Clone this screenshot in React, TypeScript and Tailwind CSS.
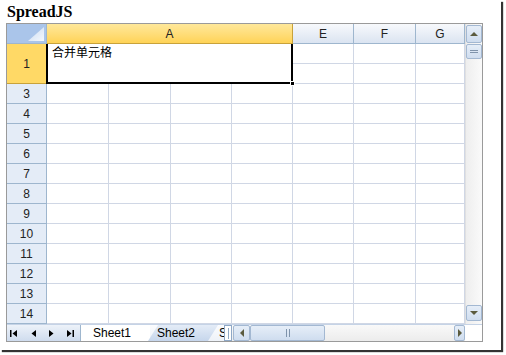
import React from "react";

const gridLine = "border-r border-b border-[#d0d7e5]";
const colHead =
  "flex items-center justify-center border-r border-b border-[#9eb6ce] bg-gradient-to-b from-[#f7f9fc] to-[#dbe4f1] text-[12px] text-[#222]";
const rowHead =
  "flex items-center justify-center border-r border-b border-[#9eb6ce] bg-[#e4ecf7] text-[12px] text-[#222]";

const rows = [3, 4, 5, 6, 7, 8, 9, 10, 11, 12, 13, 14];

function ScrollBtn({ children, className = "" }: { children?: React.ReactNode; className?: string }) {
  return (
    <div
      className={`flex shrink-0 items-center justify-center rounded-[2px] border border-[#a3b8d2] bg-gradient-to-b from-[#e6eef8] to-[#cfddef] ${className}`}
    >
      {children}
    </div>
  );
}

export default function App() {
  return (
    <div className="w-[506px] h-[355px] bg-white font-['Liberation_Sans',sans-serif]">
      <div className="w-[501px] h-[350px] bg-white shadow-[2px_2px_1px_#333]">
        <div className="pl-[7px] pt-[3px] h-[21px] font-bold text-[16px] leading-[18px] font-['Liberation_Serif',serif] text-black">
          SpreadJS
        </div>

        <div className="ml-[6px] mt-[2px] w-[477px] h-[319px] border border-[#9a9a9a] flex flex-col">
          <div className="flex h-[300px]">
            {/* sheet grid */}
            <div className="w-[458px] overflow-hidden">
              <div className="grid w-[458px] grid-cols-[40px_62px_62px_61px_61px_61px_62px_49px] grid-rows-[repeat(15,20px)]">
                <div className="relative border-r border-b border-[#9eb6ce] bg-[#aac5ea]">
                  <div className="absolute right-[2px] bottom-[2px] w-[16px] h-[14px] bg-gradient-to-br from-[#c9daf1] to-[#f4f8fd] [clip-path:polygon(100%_0,100%_100%,0_100%)]" />
                </div>
                <div className="col-span-4 flex items-center justify-center border-r border-b border-[#c8a23a] bg-gradient-to-b from-[#ffe89a] to-[#ffd355] text-[12px] text-[#222]">
                  A
                </div>
                <div className={colHead}>E</div>
                <div className={colHead}>F</div>
                <div className={colHead}>G</div>

                <div className="row-span-2 flex items-center justify-center border-r border-b border-[#c8a23a] bg-[#ffd966] text-[12px] text-[#222]">
                  1
                </div>
                <div className={`relative col-span-4 row-span-2 bg-white ${gridLine}`}>
                  <div className="pl-[5px] pt-[1px] text-[12px] leading-[14px] text-black font-['Noto_Sans_CJK_SC',sans-serif]">
                    合并单元格
                  </div>
                  <div className="absolute -left-[1px] -right-[1px] top-0 -bottom-[1px] border-l-2 border-r-2 border-b-2 border-black" />
                  <div className="absolute -right-[3px] -bottom-[3px] w-[5px] h-[5px] bg-black border border-white" />
                </div>
                {[0, 1, 2, 3, 4, 5].map((i) => (
                  <div key={i} className={gridLine} />
                ))}

                {rows.map((r) => (
                  <React.Fragment key={r}>
                    <div className={rowHead}>{r}</div>
                    {[0, 1, 2, 3, 4, 5, 6].map((c) => (
                      <div key={c} className={gridLine} />
                    ))}
                  </React.Fragment>
                ))}
              </div>
            </div>

            {/* vertical scrollbar */}
            <div className="w-[17px] flex flex-col items-center pt-[1px] pb-[3px] gap-[1px] bg-gradient-to-r from-[#eeeeee] to-[#fafafa] border-l border-[#e0e0e0]">
              <ScrollBtn className="w-[16px] h-[18px]">
                <div className="w-0 h-0 border-l-[4px] border-r-[4px] border-b-[4px] border-l-transparent border-r-transparent border-b-[#5b5b3e]" />
              </ScrollBtn>
              <ScrollBtn className="w-[16px] h-[15px] flex-col gap-[1px]">
                <div className="w-[8px] h-[1px] bg-[#7f93ab]" />
                <div className="w-[8px] h-[1px] bg-[#7f93ab]" />
              </ScrollBtn>
              <div className="flex-1" />
              <ScrollBtn className="w-[16px] h-[16px]">
                <div className="w-0 h-0 border-l-[4px] border-r-[4px] border-t-[4px] border-l-transparent border-r-transparent border-t-[#5b5b3e]" />
              </ScrollBtn>
            </div>
          </div>

          {/* tab bar */}
          <div className="flex h-[17px] border-t border-[#c5d3e6]">
            <div className="w-[74px] shrink-0 flex items-center pl-[3px] border-r border-[#9eb6ce] bg-gradient-to-b from-[#edf2f9] to-[#cfdcee] text-black">
              <svg width="9" height="9" viewBox="0 0 9 9">
                <rect x="0" y="1" width="1.5" height="7" fill="#000" />
                <polygon points="7,1 7,8 2.5,4.5" fill="#000" />
              </svg>
              <svg width="9" height="9" viewBox="0 0 9 9" className="ml-[10px]">
                <polygon points="7,1 7,8 2.5,4.5" fill="#000" />
              </svg>
              <svg width="9" height="9" viewBox="0 0 9 9" className="ml-[9px]">
                <polygon points="2,1 2,8 6.5,4.5" fill="#000" />
              </svg>
              <svg width="9" height="9" viewBox="0 0 9 9" className="ml-[10px]">
                <polygon points="1,1 1,8 5.5,4.5" fill="#000" />
                <rect x="6.5" y="1" width="1.5" height="7" fill="#000" />
              </svg>
            </div>
            <div className="flex w-[143px] shrink-0 overflow-hidden bg-gradient-to-b from-[#fbfcfe] to-[#eef2f8] text-[12px] text-black">
              <div className="w-[69px] shrink-0 flex items-center pl-[12px] bg-white">Sheet1</div>
              <div className="-ml-[2px] w-[70px] shrink-0 flex items-center pl-[9px] bg-gradient-to-b from-[#e4ecf7] to-[#c6d6ec] [clip-path:polygon(10px_0,100%_0,calc(100%-10px)_100%,0_100%)]">
                Sheet2
              </div>
              <div className="shrink-0 flex items-center pl-[1px]">Sheet3</div>
            </div>
            <div className="w-[8px] shrink-0 flex items-center justify-center border border-[#8fa8c6] bg-white">
              <div className="w-[1px] h-[11px] bg-[#8fa8c6]" />
            </div>
            <div className="flex-1 flex items-center pl-[1px] bg-gradient-to-b from-[#f9f9f9] to-[#ececec]">
              <ScrollBtn className="w-[17px] h-[16px]">
                <div className="w-0 h-0 border-t-[4px] border-b-[4px] border-r-[4px] border-t-transparent border-b-transparent border-r-[#5b5b3e]" />
              </ScrollBtn>
              <ScrollBtn className="w-[75px] h-[16px] gap-[2px]">
                <div className="w-[1px] h-[8px] bg-[#7f93ab]" />
                <div className="w-[1px] h-[8px] bg-[#7f93ab]" />
              </ScrollBtn>
              <div className="flex-1" />
              <ScrollBtn className="w-[11px] h-[16px]">
                <div className="w-0 h-0 border-t-[4px] border-b-[4px] border-l-[4px] border-t-transparent border-b-transparent border-l-[#5b5b3e]" />
              </ScrollBtn>
            </div>
            <div className="w-[17px] shrink-0 bg-white" />
          </div>
        </div>
      </div>
    </div>
  );
}
